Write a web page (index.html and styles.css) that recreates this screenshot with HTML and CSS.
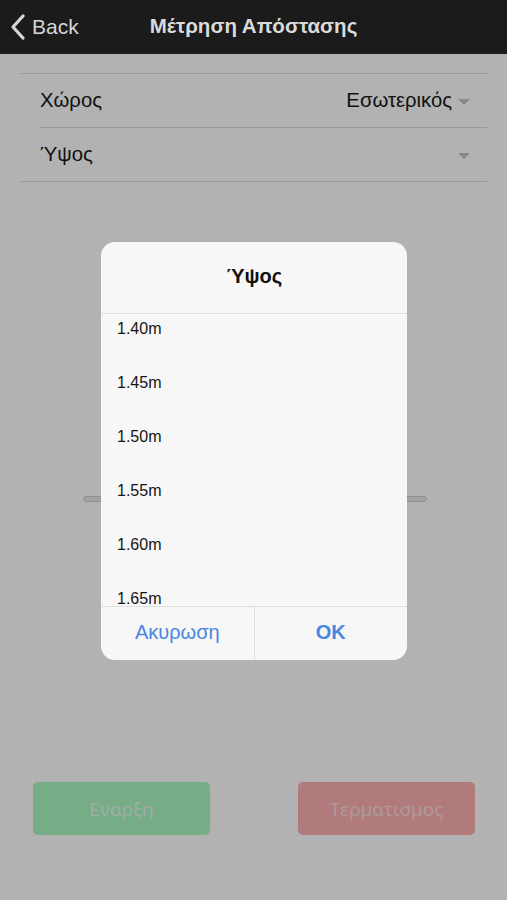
FILE: index.html
```html
<!DOCTYPE html>
<html lang="el">
<head>
<meta charset="utf-8">
<title>Μέτρηση Απόστασης</title>
<link rel="stylesheet" href="styles.css">
</head>
<body>
<div class="app">
  <header class="nav">
    <a class="back">
      <svg class="chev" width="16" height="26" viewBox="0 0 16 26"><path d="M13 2 L3 13 L13 24" fill="none" stroke="#d6d6d6" stroke-width="3.2" stroke-linecap="round" stroke-linejoin="round"/></svg>
      <span>Back</span>
    </a>
    <h1 class="title">Μέτρηση Απόστασης</h1>
  </header>
  <main class="content">
    <div class="form">
      <div class="field">
        <span class="label">Χώρος</span>
        <span class="value">Εσωτερικός</span>
        <span class="caret"></span>
      </div>
      <div class="field">
        <span class="label">Ύψος</span>
        <span class="value"></span>
        <span class="caret"></span>
      </div>
    </div>
    <div class="slider"></div>
    <div class="actions">
      <button class="btn start">Εναρξη</button>
      <button class="btn stop">Τερματισμος</button>
    </div>
  </main>
  <div class="overlay">
    <div class="dialog">
      <div class="dlg-title">Ύψος</div>
      <div class="dlg-list">
        <ul class="options">
          <li>1.40m</li>
          <li>1.45m</li>
          <li>1.50m</li>
          <li>1.55m</li>
          <li>1.60m</li>
          <li>1.65m</li>
        </ul>
      </div>
      <div class="dlg-buttons">
        <button class="dlg-btn">Ακυρωση</button>
        <button class="dlg-btn ok">OK</button>
      </div>
    </div>
  </div>
</div>
</body>
</html>
```
FILE: styles.css
```css
* { box-sizing: border-box; }
html, body { margin: 0; padding: 0; }
body {
  font-family: "Liberation Sans", Arial, sans-serif;
  background: #ffffff;
}
.app {
  position: relative;
  width: 507px;
  height: 900px;
  overflow: hidden;
  display: flex;
  flex-direction: column;
}
.nav {
  height: 54px;
  background: #1b1b1b;
  color: #d6d6d6;
  display: flex;
  align-items: center;
  position: relative;
  z-index: 3;
}
.back {
  display: flex;
  align-items: center;
  gap: 6px;
  padding-left: 10px;
  font-size: 21px;
  width: 130px;
}
.title {
  margin: 0;
  font-size: 20.5px;
  font-weight: bold;
  width: 247px;
  text-align: center;
  padding-bottom: 2px;
  color: #dadada;
}
.content {
  flex: 1;
  display: flex;
  flex-direction: column;
  padding-top: 19px;
}
.form {
  margin: 0 20px;
  border-top: 1px solid #dcdcdc;
  border-bottom: 1px solid #dcdcdc;
}
.field {
  margin-left: 20px;
  height: 53px;
  display: flex;
  align-items: center;
  padding-right: 17px;
  font-size: 20.3px;
  color: #181818;
}
.field + .field { border-top: 1px solid #dcdcdc; height: 54px; }
.label { flex: 1; }
.value { margin-right: 6px; }
.caret {
  width: 0;
  height: 0;
  border-left: 6px solid transparent;
  border-right: 6px solid transparent;
  border-top: 6px solid #c4c4c4;
  margin-top: 2px;
}
.slider {
  margin: 314px 80px 0 83px;
  height: 6px;
  border: 1px solid #cfcfcf;
  border-radius: 3px;
  background: #e8e8e8;
}
.actions {
  margin-top: 280px;
  display: flex;
  justify-content: space-between;
  padding: 0 32px 0 33px;
}
.btn {
  width: 177px;
  height: 53px;
  border: none;
  border-radius: 5px;
  font-family: "Open Sans", "Liberation Sans", sans-serif;
  font-size: 19px;
}
.start { background: #aaf8c2; color: #e8f6ec; }
.stop { background: #feb0b0; color: #f8dede; }
.overlay {
  position: absolute;
  left: 0;
  right: 0;
  top: 54px;
  bottom: 0;
  background: rgba(0, 0, 0, 0.3);
  z-index: 2;
  display: flex;
  justify-content: center;
  padding-top: 188px;
  padding-left: 1px;
}
.dialog {
  width: 306px;
  height: 418px;
  background: #f7f7f7;
  border-radius: 14px;
  overflow: hidden;
  display: flex;
  flex-direction: column;
}
.dlg-title {
  height: 72px;
  display: flex;
  align-items: center;
  justify-content: center;
  font-size: 20px;
  font-weight: bold;
  color: #111;
  border-bottom: 1px solid #dedede;
  padding-bottom: 2px;
}
.dlg-list {
  height: 292px;
  overflow: hidden;
}
.options {
  list-style: none;
  margin: -12px 0 0;
  padding: 0 0 0 16px;
}
.options li {
  height: 54px;
  line-height: 54px;
  font-size: 16px;
  color: #151515;
}
.dlg-buttons {
  flex: 1;
  display: flex;
  border-top: 1px solid #dedede;
}
.dlg-btn {
  flex: 1;
  border: none;
  background: transparent;
  font-family: "Liberation Sans", Arial, sans-serif;
  font-size: 20px;
  color: #4a86e0;
  padding: 0 0 2px;
}
.dlg-btn + .dlg-btn { border-left: 1px solid #dedede; }
.ok { font-weight: bold; }
```
